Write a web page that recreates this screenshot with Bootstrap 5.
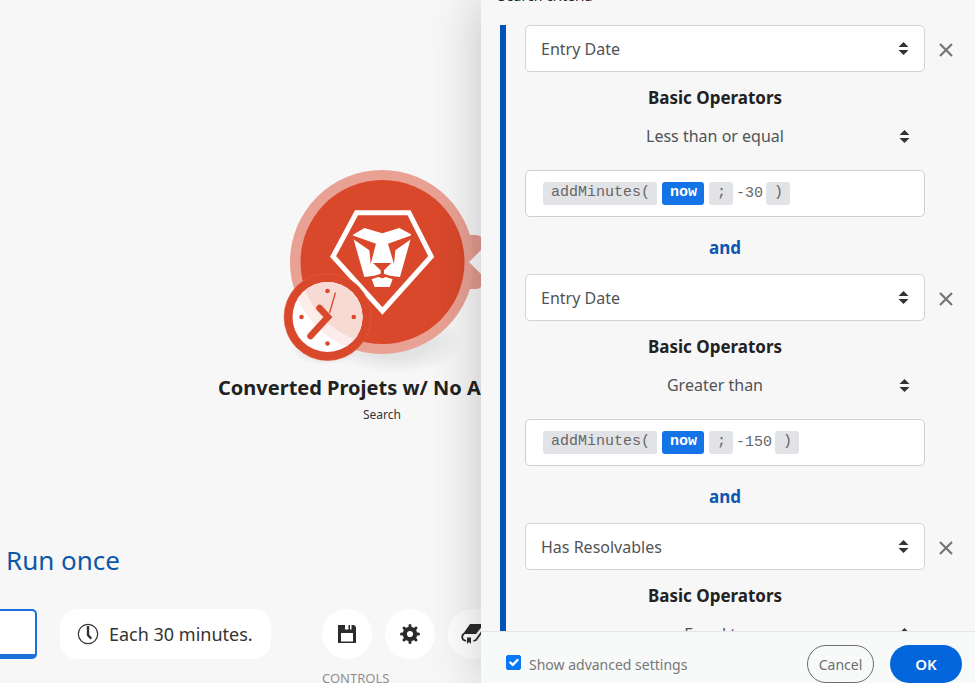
<!DOCTYPE html>
<html lang="en">
<head>
<meta charset="utf-8">
<meta name="viewport" content="width=device-width, initial-scale=1">
<title>Scenario editor</title>
<link href="https://cdn.jsdelivr.net/npm/bootstrap@5.3.0/dist/css/bootstrap.min.css" rel="stylesheet">
<style>
  body { font-family: "Noto Sans", "Open Sans", sans-serif; background: #f7f7f7; color: #222; }
  .editor { display: grid; grid-template: minmax(0, 1fr) / 37fr 38fr; height: 100vh; }

  /* Scenario canvas */
  .canvas { min-width: 0; }
  .module-btn { width: 198px; margin-top: 160px; }
  .module-name { width: 263px; font-size: 20px; line-height: 26px; }
  .module-kind { width: 198px; font-size: 12px; line-height: 20px; margin-top: 4px; color: #333; }
  .run-label { font-size: 26px; line-height: 36px; color: #0d57a8; padding-left: 6px; margin-bottom: 31px; }
  .run-box { width: 37px; height: 50px; background: #fff; border: 2px solid #1b6fd8; border-width: 2px 2px 5px 0; border-radius: 0 5px 5px 0; }
  .tool-row { gap: 23px; }
  .schedule { height: 50px; border-radius: 18px; background: #fff; font-size: 18px; color: #333; padding: 0 17px 0 16px; gap: 10px; }
  .round-tools { margin-left: 28px; gap: 13px; }
  .round-tool { width: 50px; height: 50px; background: #fff; color: #2b2b2b; }
  .tools-label { font-size: 13px; line-height: 20px; color: #909090; padding-left: 322px; margin: 9px 0 -5px; }

  /* Settings panel */
  .side-panel { background: #f7f7f7; box-shadow: 0 0 50px rgba(0,0,0,.22); min-width: 0; z-index: 2; }
  .criteria-form { min-height: 0; }
  .criteria-title { font-size: 14px; line-height: 24px; margin: -16px 0 17px 17px; }
  .criteria { border-left: 6px solid #0052b8; margin-left: 19px; padding-left: 19px; }
  .rule-grid { display: grid; grid-template-columns: minmax(0, 1fr) 50px; }
  .pick { appearance: none; height: 47px; width: 100%; font-size: 16px; color: #505356; padding: 0 36px 0 15px; border: 1px solid #d3d3d3; border-radius: 5px;
    background: #fff url("data:image/svg+xml,%3Csvg xmlns='http://www.w3.org/2000/svg' width='11' height='13' viewBox='0 0 11 13'%3E%3Cpath d='M5.500 0 10.500 5H.5zM.5 8h10L5.500 13z' fill='%23333'/%3E%3C/svg%3E") no-repeat right 15px center; }
  .pick-plain { height: 32px; border: 0; background-color: transparent; text-align-last: center; padding: 0 36px 0 16px; margin: 10px 0 18px; }
  .op-title { font-size: 17px; line-height: 24px; margin-top: 14px; padding-right: 20px; }
  .formula { height: 47px; background: #fff; border: 1px solid #cfcfcf; border-radius: 5px; padding: 0 17px; font: 15px/21px "Liberation Mono", monospace; color: #666; gap: 3px; }
  .token { background: #e2e3e7; border-radius: 3px; padding: 0 7px 0 8px; height: 23px; }
  .token-var { background: #1473e6; color: #fff; font-weight: 700; }
  .token + .token { margin-left: 2px; }
  .joiner { font-size: 17px; line-height: 24px; color: #0d57b0; margin: 19px 0 14px; }
  .remove { height: 47px; width: 41px; }
  .panel-foot { border-top: 1px solid #e6e6e6; padding: 13px 13px 0 25px; height: 52px; background: #f8f9f9; font-size: 14px; color: #777; }
  .panel-foot .form-check-input { width: 15px; height: 15px; margin: 0 8px 3px 0; border-radius: 2px; }
  .panel-foot .form-check-input:checked { background-color: #0878f9; border-color: #0878f9; background-size: 16px; background-position: center; }
  .foot-btn { height: 38px; border-radius: 19px; padding: 0; }
  .cancel { width: 67px; border: 1px solid #6e6e6e; color: #6e6e6e; font-size: 14px; }
  .ok { width: 72px; background: #0265dc; color: #fff; font-size: 15px; font-weight: 600; }
</style>
<script src="https://cdn.jsdelivr.net/npm/bootstrap@5.3.0/dist/js/bootstrap.bundle.min.js"></script>
</head>
<body>
<div class="editor overflow-hidden">
  <main class="canvas d-flex flex-column overflow-hidden">
    <button type="button" class="module-btn btn border-0 p-0 ms-auto" aria-label="Open module">
      <svg class="d-block" width="198" height="215" viewBox="283 160 198 215">
        <defs>
          <radialGradient id="shade"><stop offset=".5" stop-color="#000" stop-opacity=".08"/><stop offset="1" stop-color="#000" stop-opacity="0"/></radialGradient>
          <clipPath id="face"><circle cx="327.500" cy="317" r="35"/></clipPath>
        </defs>
        <ellipse cx="395" cy="342" rx="68" ry="32" fill="url(#shade)"/>
        <ellipse cx="325" cy="350" rx="34" ry="15" fill="url(#shade)"/>
        <path d="M464 235h12q3 0 5 2v50q-2 2-5 2h-12z" fill="#e39b8e"/>
        <circle cx="382" cy="262" r="92" fill="#e9a194"/>
        <path d="M481 250l-12 12 12 12z" fill="#fbfbfb"/>
        <circle cx="382.500" cy="262" r="82" fill="#da482b"/>
        <path d="M356.500 212.700h52.500l22.200 43.800-48.800 54.500-49.400-54.500z" fill="none" stroke="#fff" stroke-width="5"/>
        <g transform="translate(320 195) scale(.3333)">
          <path d="M98 120 133 99 187 115 238 99 273 118 272 132 240 246 210 242 192 236H182L163 242 133 246 100 130z" fill="#fff"/>
          <path d="M97 121 168 146 152 207 148 166 98 131zM275 121 204 146 222 207 226 166 275 131zM159 204H214L192 226V239H182V226z" fill="#da482b"/>
          <path d="M155 253 175 246 187 250 198 246 218 253 209 276H164z" fill="#fff"/>
        </g>
        <circle cx="327.500" cy="317" r="43.500" fill="#da482b" stroke="#e05c41" stroke-width=".6"/>
        <circle cx="327.500" cy="317" r="35" fill="#fff"/>
        <g clip-path="url(#face)">
          <circle cx="382" cy="262" r="92" fill="#fcecea"/>
          <circle cx="382.500" cy="262" r="82" fill="#f8dad4"/>
        </g>
        <g fill="#da482b"><circle cx="327.500" cy="291" r="2.300"/><circle cx="301.500" cy="317" r="2.300"/><circle cx="353.800" cy="317" r="2.300"/><circle cx="327.500" cy="343.500" r="2.300"/></g>
        <path d="M319.500 308 328 317 310.500 336" fill="none" stroke="#da482b" stroke-width="6.500" stroke-linecap="round"/>
        <path d="M335.500 292.500 329.500 313" stroke="#da482b" stroke-width="1.300"/>
      </svg>
    </button>
    <div class="module-name ms-auto fw-bold text-nowrap overflow-hidden">Converted Projets w/ No A</div>
    <div class="module-kind ms-auto text-center">Search</div>

    <div class="mt-auto">
      <div class="run-label">Run once</div>
      <div class="tool-row d-flex align-items-center">
        <button type="button" class="run-box p-0 flex-shrink-0" aria-label="Run once"></button>
        <button type="button" class="schedule btn d-flex align-items-center flex-shrink-0 text-nowrap">
          <svg width="22" height="22" viewBox="0 0 22 22" fill="none" stroke="#333"><circle cx="11" cy="11" r="9.700" stroke-width="1.200"/><path d="M11 3v9l3.200 3.800" stroke-width="2.400"/></svg>
          Each 30 minutes.
        </button>
        <div class="round-tools d-flex flex-shrink-0">
          <button type="button" class="round-tool btn rounded-circle p-0 d-flex align-items-center justify-content-center" aria-label="Save">
            <svg width="18" height="18" viewBox="0 0 18 18"><path fill="currentColor" fill-rule="evenodd" d="M0 0h16l2 2v16H0zM3 8v8.500h12V8zM7 0v4.500h3.500V0zM12 0v4.500h1.500V0z"/></svg>
          </button>
          <button type="button" class="round-tool btn rounded-circle p-0 d-flex align-items-center justify-content-center" aria-label="Settings">
            <svg width="20" height="20" viewBox="-10 -10 20 20"><circle r="5.200" fill="none" stroke="currentColor" stroke-width="4.200"/><g stroke="currentColor" stroke-width="3" stroke-linecap="round"><path d="M0-6V-8.500M0 6V8.500M-6 0H-8.500M6 0H8.500M4.300-4.300 6-6M-4.300 4.300-6 6M-4.300-4.300-6-6M4.300 4.300 6 6"/></g></svg>
          </button>
          <button type="button" class="round-tool btn rounded-circle p-0 d-flex align-items-center justify-content-center" aria-label="Notes">
            <svg width="24" height="22" viewBox="0 0 24 22"><path fill="currentColor" d="M9 1h14l-8 10H2z"/><path fill="none" stroke="currentColor" stroke-width="1.800" d="M3 10.500Q0 13 2 16.500l3 1.500M12.500 18l2.500-1 7.500-10.500"/><path fill="currentColor" d="M6 14.500h4V21l-2-2-2 2z"/></svg>
          </button>
        </div>
      </div>
      <div class="tools-label">CONTROLS</div>
    </div>
  </main>

  <aside class="side-panel d-flex flex-column">
    <form class="criteria-form flex-fill overflow-hidden d-flex flex-column">
      <div class="criteria-title">Search criteria</div>
      <div class="criteria">
        <div class="rule-grid">
          <div>
            <select class="pick" aria-label="Field 1"><option>Entry Date</option></select>
            <div class="op-title text-center fw-bold">Basic Operators</div>
            <select class="pick pick-plain" aria-label="Operator 1"><option>Less than or equal</option></select>
            <div class="formula d-flex align-items-center" role="textbox" contenteditable="true" spellcheck="false" aria-label="Value 1"><span class="token">addMinutes(</span><span class="token token-var">now</span><span class="token">;</span><span>-30</span><span class="token">)</span></div>
            <div class="joiner text-center fw-bold">and</div>
          </div>
          <button type="button" class="remove btn border-0 p-0" aria-label="Remove condition 1"><svg width="14" height="14" viewBox="0 0 14 14" stroke="#757575" stroke-width="2.200"><path d="M1 1l12 12M13 1 1 13"/></svg></button>
        </div>
        <div class="rule-grid">
          <div>
            <select class="pick" aria-label="Field 2"><option>Entry Date</option></select>
            <div class="op-title text-center fw-bold">Basic Operators</div>
            <select class="pick pick-plain" aria-label="Operator 2"><option>Greater than</option></select>
            <div class="formula d-flex align-items-center" role="textbox" contenteditable="true" spellcheck="false" aria-label="Value 2"><span class="token">addMinutes(</span><span class="token token-var">now</span><span class="token">;</span><span>-150</span><span class="token">)</span></div>
            <div class="joiner text-center fw-bold">and</div>
          </div>
          <button type="button" class="remove btn border-0 p-0" aria-label="Remove condition 2"><svg width="14" height="14" viewBox="0 0 14 14" stroke="#757575" stroke-width="2.200"><path d="M1 1l12 12M13 1 1 13"/></svg></button>
        </div>
        <div class="rule-grid">
          <div>
            <select class="pick" aria-label="Field 3"><option>Has Resolvables</option></select>
            <div class="op-title text-center fw-bold">Basic Operators</div>
            <select class="pick pick-plain" aria-label="Operator 3"><option>Equal to</option></select>
          </div>
          <button type="button" class="remove btn border-0 p-0" aria-label="Remove condition 3"><svg width="14" height="14" viewBox="0 0 14 14" stroke="#757575" stroke-width="2.200"><path d="M1 1l12 12M13 1 1 13"/></svg></button>
        </div>
      </div>
    </form>
    <footer class="panel-foot d-flex align-items-center flex-shrink-0">
      <input class="form-check-input" type="checkbox" id="advanced" checked>
      <label class="me-auto" for="advanced">Show advanced settings</label>
      <button type="button" class="foot-btn cancel btn me-3">Cancel</button>
      <button type="button" class="foot-btn ok btn">OK</button>
    </footer>
  </aside>
</div>
</body>
</html>
